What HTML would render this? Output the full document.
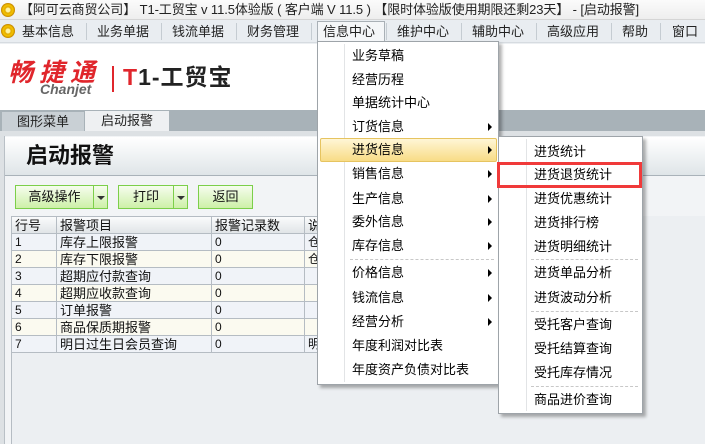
<!DOCTYPE html>
<html><head><meta charset="utf-8"><style>
*{margin:0;padding:0;box-sizing:border-box}
body{width:705px;height:444px;overflow:hidden;position:relative;background:#eceff2;font-family:"Liberation Sans","Noto Sans CJK SC","WenQuanYi Zen Hei",sans-serif;font-size:13px;color:#111}
.a{position:absolute}
.coin{position:absolute;width:14px;height:14px;border-radius:50%;background:radial-gradient(circle,#fff3a0 0 2px,#e0a800 3px,#f5c400 5px,#c08000 7px)}
.mi{position:absolute;top:20px;height:23px;line-height:23px;font-size:13px;color:#222}
.sep{position:absolute;top:23px;width:1px;height:17px;background:#c5ccd2}
.m{position:absolute;background:#fff;border:1px solid #9ea4a9;box-shadow:3px 3px 3px rgba(0,0,0,.3)}
.it{position:absolute;left:0;right:0;height:23px;line-height:23px;font-size:13px;color:#000}
.arr{position:absolute;width:0;height:0;border-top:4px solid transparent;border-bottom:4px solid transparent;border-left:4px solid #000}
.ds{position:absolute;height:0;border-top:1px dashed #c8c8c8}
.btn{position:absolute;top:185px;height:24px;border:1px solid #7ccf4a;background:linear-gradient(#f6fdee,#cdf0a8);line-height:22px;text-align:center;font-size:13px}
td{border:1px solid #b5bcc3;height:17px;padding:0 3px;font-size:12px;white-space:nowrap;overflow:hidden;line-height:15px}
table{border-collapse:collapse;table-layout:fixed}
</style></head><body>
<div class="a" style="left:0;top:0;width:705px;height:20px;background:linear-gradient(#fbfbfb,#eeeeee);border-bottom:1px solid #d5d5d5"></div>
<div class="coin" style="left:1px;top:3px"></div>
<div class="a" style="left:20px;top:2px;font-size:13px;line-height:16px;color:#222;white-space:nowrap;letter-spacing:-0.1px">【阿可云商贸公司】 T1-工贸宝 v 11.5体验版 ( 客户端 V 11.5 ) 【限时体验版使用期限还剩23天】 - [启动报警]</div>
<div class="a" style="left:0;top:20px;width:705px;height:23px;background:#e9edf1;border-bottom:1px solid #d6dbe0"></div>
<div class="coin" style="left:1px;top:24px"></div>
<div class="mi" style="left:22px">基本信息</div><div class="sep" style="left:86px"></div>
<div class="mi" style="left:97px">业务单据</div><div class="sep" style="left:161px"></div>
<div class="mi" style="left:172px">钱流单据</div><div class="sep" style="left:236px"></div>
<div class="mi" style="left:247px">财务管理</div><div class="sep" style="left:311px"></div>
<div class="a" style="left:317px;top:21px;width:68px;height:22px;border:1px solid #a9b0b6;border-bottom:none;background:#f4f6f8"></div>
<div class="mi" style="left:323px">信息中心</div><div class="sep" style="left:386px"></div>
<div class="mi" style="left:397px">维护中心</div><div class="sep" style="left:461px"></div>
<div class="mi" style="left:472px">辅助中心</div><div class="sep" style="left:536px"></div>
<div class="mi" style="left:547px">高级应用</div><div class="sep" style="left:611px"></div>
<div class="mi" style="left:622px">帮助</div><div class="sep" style="left:660px"></div>
<div class="mi" style="left:672px">窗口</div>
<div class="a" style="left:0;top:44px;width:705px;height:66px;background:#fff"></div>
<div class="a" style="left:8px;top:59px;font-size:25px;font-weight:bold;font-style:italic;color:#e0262c;letter-spacing:6px;line-height:28px">畅捷通</div>
<div class="a" style="left:40px;top:82px;font-size:14px;font-style:italic;font-weight:bold;color:#666;line-height:14px">Chanjet</div>
<div class="a" style="left:112px;top:66px;width:2px;height:26px;background:#e0262c"></div>
<div class="a" style="left:123px;top:64px;font-size:23px;font-weight:bold;line-height:26px;color:#222;letter-spacing:1px"><span style="color:#e0262c">T</span>1-工贸宝</div>
<div class="a" style="left:0;top:110px;width:705px;height:21px;background:#a8b2b8"></div>
<div class="a" style="left:2px;top:112px;width:82px;height:19px;background:#c9d0d5;line-height:19px;text-align:center;font-size:13px;color:#222">图形菜单</div>
<div class="a" style="left:85px;top:111px;width:84px;height:20px;background:#eef0f2;line-height:20px;text-align:center;font-size:13px;color:#222">启动报警</div>
<div class="a" style="left:0;top:131px;width:705px;height:313px;background:#dde1e4"></div>
<div class="a" style="left:4px;top:136px;width:701px;height:308px;background:#f2f4f6;border-left:1px solid #b9c0c6"></div>
<div class="a" style="left:5px;top:137px;width:700px;height:39px;background:linear-gradient(#ffffff,#dfe5e8);border-bottom:1px solid #a9b2b9"></div>
<div class="a" style="left:26px;top:142px;font-size:22px;line-height:28px;color:#111;font-weight:bold">启动报警</div>
<div class="btn" style="left:15px;width:79px">高级操作</div>
<div class="btn" style="left:93px;width:15px"><span class="a" style="left:3px;top:10px;border-left:4px solid transparent;border-right:4px solid transparent;border-top:4px solid #333"></span></div>
<div class="btn" style="left:118px;width:56px">打印</div>
<div class="btn" style="left:173px;width:15px"><span class="a" style="left:3px;top:10px;border-left:4px solid transparent;border-right:4px solid transparent;border-top:4px solid #333"></span></div>
<div class="btn" style="left:198px;width:55px">返回</div>
<div class="a" style="left:11px;top:216px;width:694px;height:228px;background:#eceff2;border-left:1px solid #b5bcc3"></div>
<table class="a" style="left:11px;top:216px;width:330px">
<colgroup><col style="width:45px"><col style="width:155px"><col style="width:93px"><col style="width:37px"></colgroup>
<tr style="background:linear-gradient(#fafbfc,#dfe3e6)"><td style="font-size:13px">行号</td><td style="font-size:13px">报警项目</td><td style="font-size:13px">报警记录数</td><td style="font-size:13px">说</td></tr>
<tr style="background:#f0f3f8"><td>1</td><td style="font-size:13px">库存上限报警</td><td>0</td><td>仓</td></tr>
<tr style="background:#fbfaf0"><td>2</td><td style="font-size:13px">库存下限报警</td><td>0</td><td>仓</td></tr>
<tr style="background:#f0f3f8"><td>3</td><td style="font-size:13px">超期应付款查询</td><td>0</td><td></td></tr>
<tr style="background:#fbfaf0"><td>4</td><td style="font-size:13px">超期应收款查询</td><td>0</td><td></td></tr>
<tr style="background:#f0f3f8"><td>5</td><td style="font-size:13px">订单报警</td><td>0</td><td></td></tr>
<tr style="background:#fbfaf0"><td>6</td><td style="font-size:13px">商品保质期报警</td><td>0</td><td></td></tr>
<tr style="background:#f0f3f8"><td>7</td><td style="font-size:13px">明日过生日会员查询</td><td>0</td><td>明</td></tr>
</table>
<div class="m" style="left:317px;top:41px;width:182px;height:344px">
<div class="a" style="left:26px;top:2px;width:1px;height:338px;background:#e2e4e6"></div>
<div class="a" style="left:2px;top:96px;width:177px;height:24px;border:1px solid #e6c460;border-radius:2px;background:linear-gradient(#fff6d6,#f8dc86)"></div>
<div class="it" style="top:2px;padding-left:34px">业务草稿</div>
<div class="it" style="top:26px;padding-left:34px">经营历程</div>
<div class="it" style="top:49px;padding-left:34px">单据统计中心</div>
<div class="it" style="top:73px;padding-left:34px">订货信息</div><div class="arr" style="left:170px;top:81px"></div>
<div class="it" style="top:96px;padding-left:34px">进货信息</div><div class="arr" style="left:170px;top:104px"></div>
<div class="it" style="top:120px;padding-left:34px">销售信息</div><div class="arr" style="left:170px;top:128px"></div>
<div class="it" style="top:145px;padding-left:34px">生产信息</div><div class="arr" style="left:170px;top:153px"></div>
<div class="it" style="top:168px;padding-left:34px">委外信息</div><div class="arr" style="left:170px;top:176px"></div>
<div class="it" style="top:192px;padding-left:34px">库存信息</div><div class="arr" style="left:170px;top:200px"></div>
<div class="ds" style="left:32px;top:217px;width:144px"></div>
<div class="it" style="top:219px;padding-left:34px">价格信息</div><div class="arr" style="left:170px;top:227px"></div>
<div class="it" style="top:244px;padding-left:34px">钱流信息</div><div class="arr" style="left:170px;top:252px"></div>
<div class="it" style="top:268px;padding-left:34px">经营分析</div><div class="arr" style="left:170px;top:276px"></div>
<div class="it" style="top:292px;padding-left:34px">年度利润对比表</div>
<div class="it" style="top:316px;padding-left:34px">年度资产负债对比表</div>
</div>
<div class="m" style="left:498px;top:136px;width:145px;height:278px">
<div class="a" style="left:27px;top:2px;width:1px;height:272px;background:#e2e4e6"></div>
<div class="it" style="top:3px;padding-left:35px">进货统计</div>
<div class="it" style="top:26px;padding-left:35px">进货退货统计</div>
<div class="it" style="top:50px;padding-left:35px">进货优惠统计</div>
<div class="it" style="top:74px;padding-left:35px">进货排行榜</div>
<div class="it" style="top:98px;padding-left:35px">进货明细统计</div>
<div class="ds" style="left:32px;top:122px;width:107px"></div>
<div class="it" style="top:124px;padding-left:35px">进货单品分析</div>
<div class="it" style="top:149px;padding-left:35px">进货波动分析</div>
<div class="ds" style="left:32px;top:174px;width:107px"></div>
<div class="it" style="top:176px;padding-left:35px">受托客户查询</div>
<div class="it" style="top:200px;padding-left:35px">受托结算查询</div>
<div class="it" style="top:224px;padding-left:35px">受托库存情况</div>
<div class="ds" style="left:32px;top:249px;width:107px"></div>
<div class="it" style="top:251px;padding-left:35px">商品进价查询</div>
</div>
<div class="a" style="left:497px;top:162px;width:145px;height:26px;border:3px solid #f03a3a"></div>
</body></html>
